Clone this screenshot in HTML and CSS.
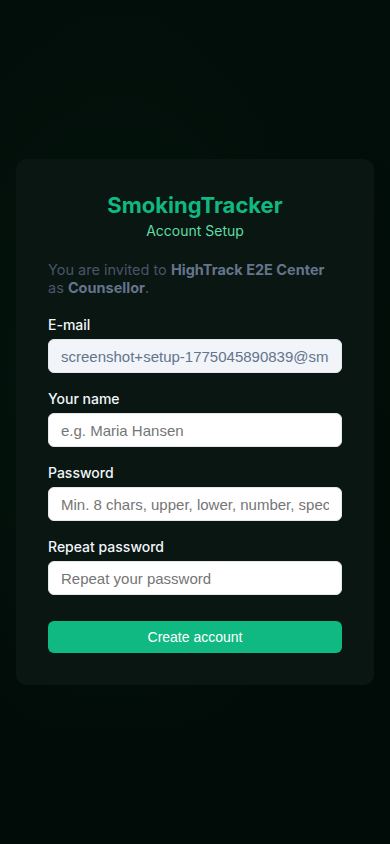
FILE: index.html
```html
<!DOCTYPE html>
<html lang="en">
	<head>
		<meta charset="utf-8" />
		<meta name="viewport" content="width=device-width, initial-scale=1" />
		<title>SmokingTracker - Account Setup</title>
		<link rel="stylesheet" href="styles.css">
	</head>

	<body>
		<main class="page">
			<div class="setup-card">
				<div class="brand">
					<h1 class="brand-title">SmokingTracker</h1>
					<p class="brand-sub">Account Setup</p>
				</div>

				<p class="invite">
					You are invited to <strong>HighTrack E2E Center</strong> as <strong>Counsellor</strong>.
				</p>

				<form class="setup-form">
					<label class="field">
						<span class="field-label">E-mail</span>
						<input class="field-input" type="email" value="screenshot+setup-1775045890839@smokingtracker.test" readonly />
					</label>

					<label class="field">
						<span class="field-label">Your name</span>
						<input class="field-input" type="text" placeholder="e.g. Maria Hansen" />
					</label>

					<label class="field">
						<span class="field-label">Password</span>
						<input class="field-input" type="password" placeholder="Min. 8 chars, upper, lower, number, special" />
					</label>

					<label class="field">
						<span class="field-label">Repeat password</span>
						<input class="field-input" type="password" placeholder="Repeat your password" />
					</label>

					<button class="submit-btn" type="button">Create account</button>
				</form>
			</div>
		</main>
	</body>
</html>
```

FILE: styles.css
```css
html,
body {
	margin: 0;
	padding: 0;
	min-height: 100%;
}

body {
	font-family: Inter, 'Noto Sans', sans-serif;
	background: #010b07;
	background-image:
		radial-gradient(ellipse at 30% 45%, #04150e 0%, rgba(4, 21, 14, 0) 60%),
		linear-gradient(180deg, #020e09 0%, #010b07 100%);
	color: #e5e7eb;
}

.page {
	min-height: 844px;
	display: flex;
	align-items: center;
	justify-content: center;
	padding: 0 16px;
	box-sizing: border-box;
}

.setup-card {
	width: 100%;
	background: #0a1612;
	border-radius: 10px;
	padding: 32px;
	box-sizing: border-box;
}

.brand {
	text-align: center;
}

.brand-title {
	margin: 0 0 2px;
	font-size: 22px;
	line-height: 28px;
	font-weight: 700;
	color: #10b981;
}

.brand-sub {
	margin: 0;
	font-size: 14px;
	line-height: 20px;
	color: #5fdca5;
}

.invite {
	margin: 20px 0 18px;
	font-size: 14.5px;
	line-height: 18px;
	color: #475569;
}

.invite strong {
	color: #64748b;
	font-weight: 700;
}

.setup-form {
	display: flex;
	flex-direction: column;
	gap: 16px;
}

.field {
	display: flex;
	flex-direction: column;
	gap: 4px;
}

.field-label {
	font-size: 14px;
	line-height: 20px;
	font-weight: 500;
	color: #f1f5f9;
}

.field-input {
	height: 34px;
	padding: 0 12px;
	border: 1px solid #e5e7eb;
	border-radius: 6px;
	background: #ffffff;
	font-family: 'Liberation Sans', Arial, sans-serif;
	font-size: 15px;
	color: #111827;
	box-sizing: border-box;
	outline: none;
}

.field-input::placeholder {
	color: #757575;
}

.field-input[readonly] {
	background: #f1f5f9;
	color: #64748b;
}

.submit-btn {
	margin-top: 10px;
	height: 32px;
	border: 0;
	border-radius: 6px;
	background: #10b981;
	color: #ffffff;
	font-family: 'Liberation Sans', Arial, sans-serif;
	font-size: 14px;
	cursor: pointer;
}
```
